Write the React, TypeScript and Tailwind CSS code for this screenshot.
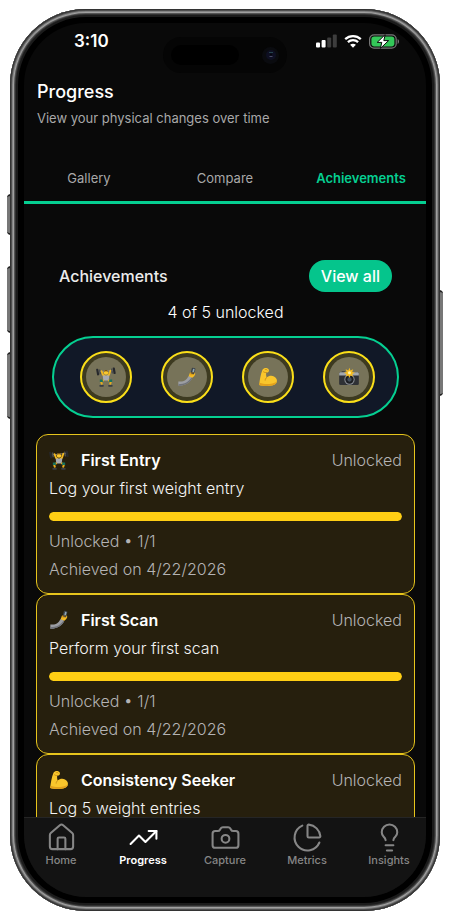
import type { ReactNode } from 'react';
import { Camera, ChartPie, House, Lightbulb, TrendingUp } from 'lucide-react';
import clsx from 'clsx';

function LifterIcon({ className }: { className: string }) {
  return (
    <svg viewBox="0 0 24 24" className={className} aria-hidden="true">
      <path d="M3 6 21 4" stroke="#8b8f94" strokeWidth="1" />
      <rect x="0.8" y="2" width="2.6" height="8" rx="1" fill="#26282c" transform="rotate(-10 2.7 6.5)" />
      <rect x="3.8" y="2.8" width="1.8" height="6" rx=".7" fill="#4a4d52" transform="rotate(-10 5 6)" />
      <rect x="20.6" y="0.6" width="2.6" height="8" rx="1" fill="#26282c" transform="rotate(-10 21.3 5)" />
      <rect x="18.4" y="1.8" width="1.8" height="6" rx=".7" fill="#4a4d52" transform="rotate(-10 19 5)" />
      <path d="M6.600 5 8.400 9.400l2 1.600M17.200 4.400l-1.600 5-2 1.600" fill="none" stroke="#f0b821" strokeWidth="2.200" strokeLinecap="round" strokeLinejoin="round" />
      <circle cx="12" cy="6.600" r="2.800" fill="#fbc92d" />
      <path d="M9.400 5.800c.2-3 5-3 5.200 0-1.200-1-4-1-5.200 0z" fill="#7a5518" />
      <path d="M8 10.200h8l-.8 6H8.800z" fill="#a6aab1" />
      <path d="M9.400 15.800 6 17l1.200 4M14.600 15.800 18 17l-1.200 4" fill="none" stroke="#e5ac1f" strokeWidth="2.400" strokeLinejoin="round" />
      <path d="M4.600 15h3.600v3H4.600zM15.800 15h3.600v3h-3.600z" fill="#16735f" />
      <path d="M5 22.600h3.400M15.600 22.600H19" stroke="#3a3e44" strokeWidth="2.200" strokeLinecap="round" />
    </svg>
  );
}

function SelfieIcon({ className }: { className: string }) {
  return (
    <svg viewBox="0 0 24 24" className={className} aria-hidden="true">
      <path d="M1.600 17.400c4.600.4 8-.6 10.200-3.400l2.400-3.400 4.200 2.200c-2 5-7.400 9.400-16.800 9.800z" fill="#9c9ea3" />
      <path d="M2 20.800c7.400-.4 12-3 15.400-8.200l1 .2c-2 5-7.400 9.400-16.800 9.800z" fill="#6f7278" />
      <path d="m14 11 1.600-4.200 4.600-1.400 1.800 2.800-1.200 2.600-2.400 2.200z" fill="#f5bd25" />
      <rect x="17" y="1" width="4.400" height="7.400" rx="1" fill="#3b4149" transform="rotate(14 19 5)" />
      <rect x="18.600" y="2" width="2" height="4" rx=".6" fill="#8fa7b5" transform="rotate(14 19 5)" />
      <path d="m15.800 7.600 3.400-.6M16.200 9.400l3.600-.4" stroke="#c98a12" strokeWidth=".8" strokeLinecap="round" />
    </svg>
  );
}

function BicepsIcon({ className }: { className: string }) {
  return (
    <svg viewBox="0 0 24 24" className={className} aria-hidden="true">
      <path
        d="M5.400 3.200C6.600 1.400 9 .8 11 1.400c1.800.6 2.600 2 2 3.600-.4 1.200-1.600 1.800-3 1.600-.6 1.800-.2 4 .4 6 2.200-2 6-2.600 8.800-1.200 3.200 1.600 4.400 4.800 3 7.600-1.600 2.800-6 3.800-10.800 3.800-4 0-7.400-.2-10-1.200C2 15.800 3.200 8.400 5.400 3.200z"
        fill="#f9c62c"
      />
      <path d="M2 19c6 2.400 15 2 20.600-1.200-1 3.600-5.800 5-11.200 5-4 0-7.400-.2-10-1.200z" fill="#e2a11c" />
      <path d="M10.400 12.600c-1.200 1-1.800 2-1.800 3.200M6.600 5.800c1.200.8 2.200 1 3.400.8M8.600 3.200c1-.4 2-.2 2.600.6" fill="none" stroke="#b87a10" strokeWidth=".8" strokeLinecap="round" />
    </svg>
  );
}

function FlashCameraIcon({ className }: { className: string }) {
  return (
    <svg viewBox="0 0 24 24" className={className} aria-hidden="true">
      <rect x="3" y="5" width="4.600" height="3" rx="1" fill="#34373b" />
      <rect x=".2" y="6.400" width="23.600" height="15.200" rx="1.600" fill="#2f3135" />
      <path d="M.2 8c0-.9.700-1.600 1.600-1.600h20.400c.9 0 1.600.7 1.600 1.600v2.200H.2z" fill="#a4a8ad" />
      <circle cx="12.600" cy="15" r="6.200" fill="#8a8e94" />
      <circle cx="12.600" cy="15" r="5" fill="#1d1f23" />
      <circle cx="12.600" cy="15" r="2.600" fill="#46505c" />
      <path d="m12.500 1 1.300 3.200 3.200-1.600-1.200 3.300 3.400 1.100-3.400 1.300 1.200 3.200-3.200-1.400-1.300 3.200-1.300-3.200L8 11.500l1.200-3.200L5.800 7l3.400-1.100L8 2.600l3.200 1.600z" fill="#f7bd1f" />
      <circle cx="12.500" cy="7" r="1.800" fill="#fff1a6" />
    </svg>
  );
}

const tabs = ['Gallery', 'Compare', 'Achievements'];

const badges = [
  { name: 'First Entry', Icon: LifterIcon },
  { name: 'First Scan', Icon: SelfieIcon },
  { name: 'Consistency Seeker', Icon: BicepsIcon },
  { name: 'Photographer', Icon: FlashCameraIcon },
];

type Achievement = {
  title: string;
  description: string;
  current: number;
  goal: number;
  achievedOn?: string;
  Icon: typeof LifterIcon;
};

const achievements: Achievement[] = [
  { title: 'First Entry', description: 'Log your first weight entry', current: 1, goal: 1, achievedOn: '4/22/2026', Icon: LifterIcon },
  { title: 'First Scan', description: 'Perform your first scan', current: 1, goal: 1, achievedOn: '4/22/2026', Icon: SelfieIcon },
  { title: 'Consistency Seeker', description: 'Log 5 weight entries', current: 5, goal: 5, Icon: BicepsIcon },
];

const navItems = [
  { label: 'Home', Icon: House },
  { label: 'Progress', Icon: TrendingUp },
  { label: 'Capture', Icon: Camera },
  { label: 'Metrics', Icon: ChartPie },
  { label: 'Insights', Icon: Lightbulb },
];

function StatusBar() {
  return (
    <div className="relative flex h-[55px] shrink-0 items-start justify-between pt-1.5 pr-[26px] pl-[50px]">
      <span className="text-[17px] leading-6 font-semibold">3:10</span>
      {/* camera cutout */}
      <div className="absolute top-[14px] left-1/2 flex h-9 w-[124px] -translate-x-1/2 items-center justify-between rounded-full bg-[#050505] px-2">
        <div className="h-5 w-[68px] rounded-full bg-black" />
        <div className="flex size-[17px] items-center justify-center rounded-full bg-[#0a0b0f]">
          <svg viewBox="0 0 10 10" className="size-[10px]" aria-hidden="true">
            <circle cx="5" cy="5" r="5" fill="#0e0f22" />
            <path d="M3 2.500h4" stroke="#24434e" />
            <path d="M3.500 6.500h3" stroke="#4a4c68" />
            <circle cx="5" cy="4.500" r="1" fill="#05060c" />
          </svg>
        </div>
      </div>
      <div className="flex h-6 items-center gap-[7px]">
        <svg viewBox="0 0 21 14" className="h-[14px] w-[21px]" aria-hidden="true">
          <rect x="0" y="8.500" width="4" height="5" rx="1" fill="#fff" />
          <rect x="5.600" y="6" width="4" height="7.500" rx="1" fill="#fff" />
          <rect x="11.200" y="3.500" width="4" height="10" rx="1" fill="#3d3d3d" />
          <rect x="16.800" y="0.500" width="4" height="13" rx="1" fill="#3d3d3d" />
        </svg>
        <svg viewBox="0 0 18 14" className="h-[14px] w-[18px]" aria-hidden="true">
          <path d="M1.200 5.200c4.400-4.100 11.200-4.100 15.600 0M3.900 8.200c2.900-2.700 7.300-2.700 10.200 0" fill="none" stroke="#fff" strokeWidth="2.300" />
          <path d="M9 13.700 6.100 10.800c1.600-1.500 4.200-1.500 5.800 0z" fill="#fff" />
        </svg>
        <svg viewBox="0 0 31 15" className="h-[15px] w-[31px]" aria-hidden="true">
          <rect x=".6" y=".8" width="26.600" height="13.400" rx="4.400" fill="none" stroke="#777" strokeWidth="1.200" />
          <rect x="2.400" y="2.600" width="23" height="9.800" rx="2.800" fill="#34c759" />
          <path d="M28.600 5v5c1.900-.8 1.900-4.200 0-5z" fill="#777" />
          <path d="M16.200.6 8.200 8.400h4.600l-1.400 6L19.600 6.600h-4.800z" fill="#fff" stroke="#0a0a0a" strokeWidth="1" />
        </svg>
      </div>
    </div>
  );
}

function BottomNav() {
  return (
    <nav className="grid h-20 shrink-0 grid-cols-5 gap-2 border-t border-[#252525] bg-[#131313] pt-1">
      {navItems.map(({ label, Icon }) => (
        <a
          key={label}
          href={`#${label.toLowerCase()}`}
          className={clsx(
            'flex flex-col items-center text-[11px] leading-[14px]',
            label === 'Progress' ? 'font-semibold text-white' : 'font-medium text-[#868686]',
          )}
        >
          <Icon size={31} strokeWidth={1.6} />
          {label}
        </a>
      ))}
    </nav>
  );
}

function AchievementCard({ achievement }: { achievement: Achievement }) {
  const { title, description, current, goal, achievedOn, Icon } = achievement;
  return (
    <li className="rounded-xl border border-[#e6c41c] bg-[#261f0d] px-3 pt-[13px] pb-3 text-base font-light">
      <div className="flex items-center">
        <Icon className="mr-3 size-5" />
        <h3 className="font-semibold">{title}</h3>
        <span className="ml-auto text-[#b4b3b4]">Unlocked</span>
      </div>
      <p className="mt-1 text-[#f4f4f4]">{description}</p>
      <div
        role="progressbar"
        aria-label={title}
        aria-valuenow={current}
        aria-valuemax={goal}
        className="mt-3 h-[9px] overflow-hidden rounded-full bg-[#3a3215]"
      >
        <div className="h-full rounded-full bg-[#ffce14]" style={{ width: `${(current / goal) * 100}%` }} />
      </div>
      {achievedOn && (
        <>
          <p className="mt-2 text-[#b4b3b4]">
            Unlocked • {current}/{goal}
          </p>
          <p className="mt-1 text-[#b4b3b4]">Achieved on {achievedOn}</p>
        </>
      )}
    </li>
  );
}

function Phone({ children }: { children: ReactNode }) {
  return (
    <div className="relative h-full">
      {/* side buttons */}
      <div className="absolute top-[185px] -left-[3px] h-[41px] w-1 rounded-l-sm border-y-2 border-[#222] bg-[#777]" />
      <div className="absolute top-[257px] -left-[3px] h-[67px] w-1 rounded-l-sm border-y-2 border-[#222] bg-[#777]" />
      <div className="absolute top-[343px] -left-[3px] h-[67px] w-1 rounded-l-sm border-y-2 border-[#222] bg-[#777]" />
      <div className="absolute top-[281px] -right-[3px] h-[106px] w-1 rounded-r-sm border-y-2 border-[#222] bg-[#777]" />
      <div className="relative h-full rounded-[76px] bg-black p-[14px] shadow-[inset_0_0_0_1px_#333,inset_0_0_0_2px_#505050,inset_0_0_0_3px_#838383,inset_0_0_0_4px_#a0a0a0,inset_0_0_0_5px_#555,inset_0_0_0_6px_#303030,inset_0_0_0_8px_#1b1b1b]">
        <div className="flex h-full flex-col overflow-hidden rounded-[62px] bg-[#090909]">{children}</div>
      </div>
    </div>
  );
}

export default function App() {
  return (
    <div className="mx-auto h-screen max-w-[450px] bg-white px-[10px] py-[9px] font-['Inter',sans-serif] text-white">
      <Phone>
        <StatusBar />
        <header className="px-[13px]">
          <h1 className="text-lg leading-7 font-medium">Progress</h1>
          <p className="mt-0.5 text-[13px] leading-5 text-[#a8a8a8]">View your physical changes over time</p>
        </header>
        <div role="tablist" className="mt-7 grid shrink-0 grid-cols-3 gap-1.5 border-b-3 border-[#05cf91]">
          {tabs.map((tab) => (
            <button
              key={tab}
              role="tab"
              aria-selected={tab === 'Achievements'}
              className={clsx(
                'h-[45px] text-[13px]',
                tab === 'Achievements' ? 'font-semibold text-[#05cf91]' : 'text-[#a8a8a8]',
              )}
            >
              {tab}
            </button>
          ))}
        </div>
        <main className="min-h-0 flex-1 overflow-hidden pt-14 pr-[11px] pl-3">
          <div className="flex items-center justify-between px-[23px]">
            <h2 className="text-base font-medium text-[#ececec]">Achievements</h2>
            <button className="h-8 rounded-full bg-[#05c58c] px-3 text-base font-medium">View all</button>
          </div>
          <p className="mt-2 text-center text-base font-light">4 of 5 unlocked</p>
          <div className="mx-4 mt-3 flex gap-[29px] rounded-full border-2 border-[#05cf91] bg-[#111827] py-[13px] pl-[26px]">
            {badges.map(({ name, Icon }) => (
              <div
                key={name}
                className="flex size-[52px] shrink-0 items-center justify-center rounded-full border-2 border-[#fbdf19] bg-[#3d3a20]"
              >
                <div className="flex size-10 items-center justify-center rounded-full bg-[#777359]">
                  <Icon className="size-5" />
                </div>
              </div>
            ))}
          </div>
          <ul className="mt-4">
            {achievements.map((achievement) => (
              <AchievementCard key={achievement.title} achievement={achievement} />
            ))}
          </ul>
        </main>
        <BottomNav />
      </Phone>
    </div>
  );
}
